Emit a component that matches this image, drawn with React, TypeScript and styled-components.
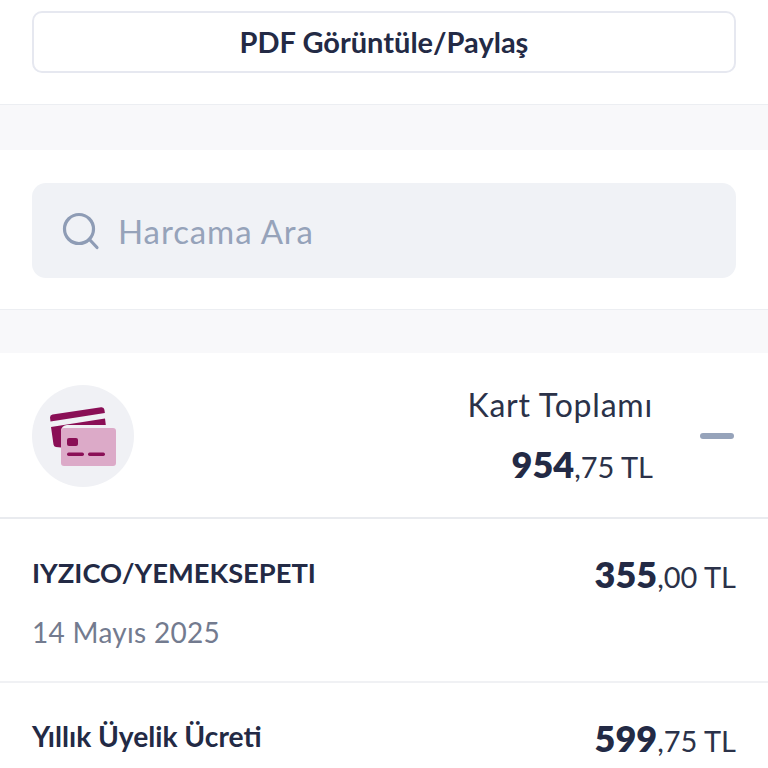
import React from "react";
import styled, { createGlobalStyle } from "styled-components";

const Global = createGlobalStyle`
  html, body { margin: 0; padding: 0; background: #ffffff; }
  body { font-family: "Lato", "Liberation Sans", sans-serif; color: #232a45; }
  #root { width: 768px; height: 768px; overflow: hidden; }
`;

const Page = styled.div`
  display: flex;
  flex-direction: column;
  width: 768px;
  height: 768px;
  overflow: hidden;
  background: #ffffff;
`;

const TopSection = styled.section`
  box-sizing: border-box;
  flex: none;
  height: 105px;
  padding: 11px 32px 0;
  border-bottom: 1px solid #eceef2;
`;

const PdfButton = styled.button`
  box-sizing: border-box;
  display: block;
  width: 100%;
  height: 62px;
  background: #ffffff;
  border: 2px solid #e6e8f0;
  border-radius: 10px;
  font: 700 29px "Lato", sans-serif;
  color: #232a45;
  padding: 0 0 2px;
`;

const Spacer = styled.div<{ $h: number }>`
  height: ${(p) => p.$h}px;
  background: #f8f8fa;
  flex: none;
`;

const SearchSection = styled.section`
  box-sizing: border-box;
  flex: none;
  height: 160px;
  padding: 33px 32px 0;
  border-bottom: 1px solid #eceef2;
`;

const SearchBox = styled.div`
  display: flex;
  align-items: center;
  gap: 18px;
  box-sizing: border-box;
  height: 95px;
  padding: 0 30px;
  background: #f0f2f6;
  border-radius: 14px;
`;

const SearchText = styled.span`
  font-size: 33px;
  font-weight: 400;
  color: #96a3ba;
  letter-spacing: 0.9px;
`;

const CardHeader = styled.section`
  box-sizing: border-box;
  flex: none;
  height: 166px;
  display: flex;
  align-items: center;
  padding: 2px 34px 0 32px;
  border-bottom: 2px solid #e9ebef;
`;

const IconCircle = styled.div`
  width: 102px;
  height: 102px;
  border-radius: 50%;
  background: #f0f1f5;
  display: flex;
  align-items: center;
  justify-content: center;
  flex: none;
`;

const TotalBlock = styled.div`
  margin-left: auto;
  display: flex;
  flex-direction: column;
  align-items: flex-end;
  gap: 21px;
`;

const TotalLabel = styled.div`
  font-size: 32px;
  line-height: 38px;
  color: #2b3249;
  letter-spacing: 0.8px;
`;

const Amount = styled.div`
  font-size: 29px;
  line-height: 38px;
  color: #2b3249;
  white-space: nowrap;
`;

const AmountStrong = styled.strong`
  font-size: 36px;
  font-weight: 800;
  color: #232a45;
`;

const Dash = styled.div`
  width: 34px;
  height: 6px;
  border-radius: 3px;
  background: #96a3ba;
  margin-left: 47px;
  flex: none;
`;

const Row = styled.section<{ $h: number }>`
  box-sizing: border-box;
  height: ${(p) => p.$h}px;
  flex: none;
  padding: 34px 32px 0;
  border-bottom: 2px solid #f0f1f4;
`;

const RowTop = styled.div`
  display: flex;
  justify-content: space-between;
  align-items: center;
  height: 44px;
`;

const RowTitle = styled.div<{ $size: number }>`
  font-size: ${(p) => p.$size}px;
  font-weight: 700;
  color: #232a45;
  padding-bottom: 6px;
`;

const RowDate = styled.div`
  margin-top: 18px;
  font-size: 28px;
  line-height: 34px;
  color: #737b8f;
  letter-spacing: 0.3px;
`;

const SearchIcon = () => (
  <svg width="38" height="38" viewBox="0 0 38 38" fill="none" stroke="#8e9cb5" strokeWidth="3.2" strokeLinecap="round">
    <circle cx="17" cy="17" r="14.5" />
    <path d="M27.5 27.5L35 35.5" />
  </svg>
);

const CardsIcon = () => (
  <svg width="68" height="62" viewBox="0 0 68 62" fill="none">
    <path d="M1 12.500a3 3 0 0 1 2.500-3L52 2.200a3 3 0 0 1 3.400 2.600l.5 3.200L1.500 16.500z" fill="#8a0f56" />
    <path d="M2 22l54-8.500.8 6.500H18a6 6 0 0 0-6 6v16.500l-5-.5a3 3 0 0 1-2.500-2.500z" fill="#8a0f56" />
    <rect x="12" y="23" width="55" height="38" rx="3" fill="#dcaac8" />
    <rect x="18" y="33" width="11" height="8" rx="2" fill="#8a0f56" />
    <rect x="18" y="47.500" width="17" height="3.500" rx="1.700" fill="#8a0f56" />
    <rect x="39" y="47.500" width="17" height="3.500" rx="1.700" fill="#8a0f56" />
  </svg>
);

export default function App() {
  return (
    <Page>
      <Global />
      <TopSection>
        <PdfButton>PDF Görüntüle/Paylaş</PdfButton>
      </TopSection>
      <Spacer $h={45} />
      <SearchSection>
        <SearchBox>
          <SearchIcon />
          <SearchText>Harcama Ara</SearchText>
        </SearchBox>
      </SearchSection>
      <Spacer $h={43} />
      <CardHeader>
        <IconCircle>
          <CardsIcon />
        </IconCircle>
        <TotalBlock>
          <TotalLabel>Kart Toplamı</TotalLabel>
          <Amount>
            <AmountStrong>954</AmountStrong>,75 TL
          </Amount>
        </TotalBlock>
        <Dash />
      </CardHeader>
      <Row $h={164}>
        <RowTop>
          <RowTitle $size={27.3}>IYZICO/YEMEKSEPETI</RowTitle>
          <Amount>
            <AmountStrong>355</AmountStrong>,00 TL
          </Amount>
        </RowTop>
        <RowDate>14 Mayıs 2025</RowDate>
      </Row>
      <Row $h={120}>
        <RowTop>
          <RowTitle $size={28.2}>Yıllık Üyelik Ücreti</RowTitle>
          <Amount>
            <AmountStrong>599</AmountStrong>,75 TL
          </Amount>
        </RowTop>
      </Row>
    </Page>
  );
}
